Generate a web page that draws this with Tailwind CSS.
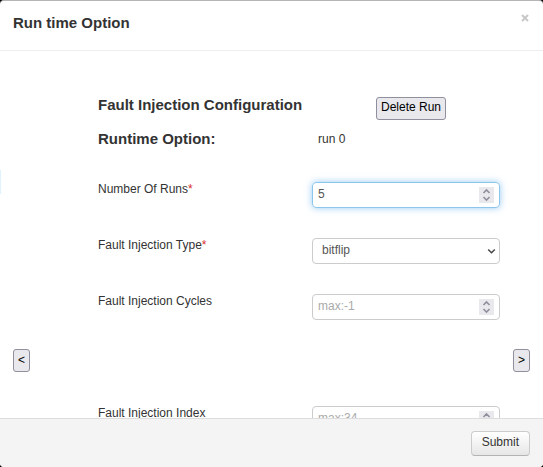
<!DOCTYPE html>
<html lang="en" class="bg-black">
<head>
<meta charset="utf-8">
<title>Run time Option</title>
<script src="https://cdn.jsdelivr.net/npm/@tailwindcss/browser@4"></script>
</head>
<body class="font-['Liberation_Sans',Arial,sans-serif] text-xs text-[#333]">
<div role="dialog" aria-labelledby="title" class="flex h-screen flex-col overflow-hidden rounded-[4px] border-t border-[#b5b5b5] bg-white">
  <header class="flex shrink-0 items-start justify-between border-b border-[#eee] px-[13px] pt-3 pb-[17px]">
    <h1 id="title" class="text-[15px] leading-5 font-bold">Run time Option</h1>
    <button type="button" aria-label="Close" class="flex h-[10px] w-[10px] items-center justify-center text-[#c8c8c8]">
      <svg class="size-2" viewBox="0 0 8 8" fill="none" stroke="currentColor" stroke-width="2"><path d="M1 1l6 6M7 1L1 7"/></svg>
    </button>
  </header>

  <main class="relative min-h-0 flex-1 overflow-hidden">
    <!-- focus glow of the neighbouring slide -->
    <div class="absolute top-[119px] left-0 h-6 w-px bg-[#dff2fd]"></div>
    <div class="flex min-h-[618px] items-center justify-between px-[13px]">
      <button type="button" aria-label="Previous run" class="h-[23px] w-[17px] shrink-0 rounded-[3px] border border-[#8f8f9d] bg-[#e9e9ed] leading-5 text-black">&lt;</button>
      <form id="run" class="flex-1 self-stretch pt-[44px] pr-[13px] pl-[68px]">
        <div class="flex h-[34px] items-start">
          <h2 class="w-[278px] text-[15px] leading-5 font-bold">Fault Injection Configuration</h2>
          <button type="button" class="mt-[2px] h-[23px] rounded-[3px] border border-[#8f8f9d] bg-[#e9e9ed] px-1 pb-[3px] leading-4 text-black">Delete Run</button>
        </div>
        <div class="flex h-[53px] items-start">
          <h2 class="w-[220px] text-[15px] leading-5 font-bold">Runtime Option:</h2>
          <span class="leading-5">run 0</span>
        </div>
        <div class="grid grid-cols-[1fr_188px] auto-rows-[56px] items-start">
          <label for="runs" class="leading-[14px]">Number Of Runs<span class="text-[#d92b2b]">*</span></label>
          <div class="flex h-[26px] items-center rounded-[4px] border border-[#8dc6ec] pr-[5px] shadow-[0_0_7px_rgba(82,168,236,0.6)]">
            <input id="runs" type="number" value="5" class="w-full min-w-0 flex-1 [appearance:textfield] pb-[2px] pl-[5px] leading-5 text-[#555] outline-none">
            <svg class="h-4 w-[15px] bg-[#e9e9ed]" viewBox="0 0 15 16" fill="none" stroke="#8f8f9d" stroke-width="1.6"><path d="M4.5 6l3-3 3 3M4.5 10l3 3 3-3"/></svg>
          </div>

          <label for="type" class="leading-[14px]">Fault Injection Type<span class="text-[#d92b2b]">*</span></label>
          <div class="relative h-[26px]">
            <select id="type" class="h-full w-full appearance-none rounded-[4px] border border-[#ccc] bg-white pb-[2px] pl-[9px] text-[#555]">
              <option>bitflip</option>
            </select>
            <svg class="pointer-events-none absolute top-[10px] right-1 h-[7px] w-[9px]" viewBox="0 0 9 7" fill="none" stroke="#444" stroke-width="1.4"><path d="M1.2 1.5l3.3 3.3 3.3-3.3"/></svg>
          </div>

          <label for="cycles" class="leading-[14px]">Fault Injection Cycles</label>
          <div class="flex h-[26px] items-center rounded-[4px] border border-[#ccc] pr-[5px]">
            <input id="cycles" type="number" placeholder="max:-1" class="w-full min-w-0 flex-1 [appearance:textfield] pb-[2px] pl-[5px] leading-5 text-[#555] outline-none placeholder:text-[#aaa]">
            <svg class="h-4 w-[15px] bg-[#e9e9ed]" viewBox="0 0 15 16" fill="none" stroke="#8f8f9d" stroke-width="1.6"><path d="M4.5 6l3-3 3 3M4.5 10l3 3 3-3"/></svg>
          </div>

          <label for="index" class="row-start-5 leading-[14px]">Fault Injection Index</label>
          <div class="row-start-5 flex h-[26px] items-center rounded-[4px] border border-[#ccc] pr-[5px]">
            <input id="index" type="number" placeholder="max:34" class="w-full min-w-0 flex-1 [appearance:textfield] pb-[2px] pl-[5px] leading-5 text-[#555] outline-none placeholder:text-[#aaa]">
            <svg class="h-4 w-[15px] bg-[#e9e9ed]" viewBox="0 0 15 16" fill="none" stroke="#8f8f9d" stroke-width="1.6"><path d="M4.5 6l3-3 3 3M4.5 10l3 3 3-3"/></svg>
          </div>
        </div>
      </form>
      <button type="button" aria-label="Next run" class="h-[23px] w-[17px] shrink-0 rounded-[3px] border border-[#8f8f9d] bg-[#e9e9ed] leading-5 text-black">&gt;</button>
    </div>
  </main>

  <footer class="flex shrink-0 justify-end border-t border-[#ddd] bg-[#f4f4f4] px-[13px] pt-3 pb-[11px]">
    <button type="submit" form="run" class="h-[25px] rounded-[4px] border border-[#ccc] border-b-[#b3b3b3] bg-linear-to-b from-white to-[#e6e6e6] px-[10px] pb-[3px] leading-5 text-[#333]">Submit</button>
  </footer>
</div>
</body>
</html>
